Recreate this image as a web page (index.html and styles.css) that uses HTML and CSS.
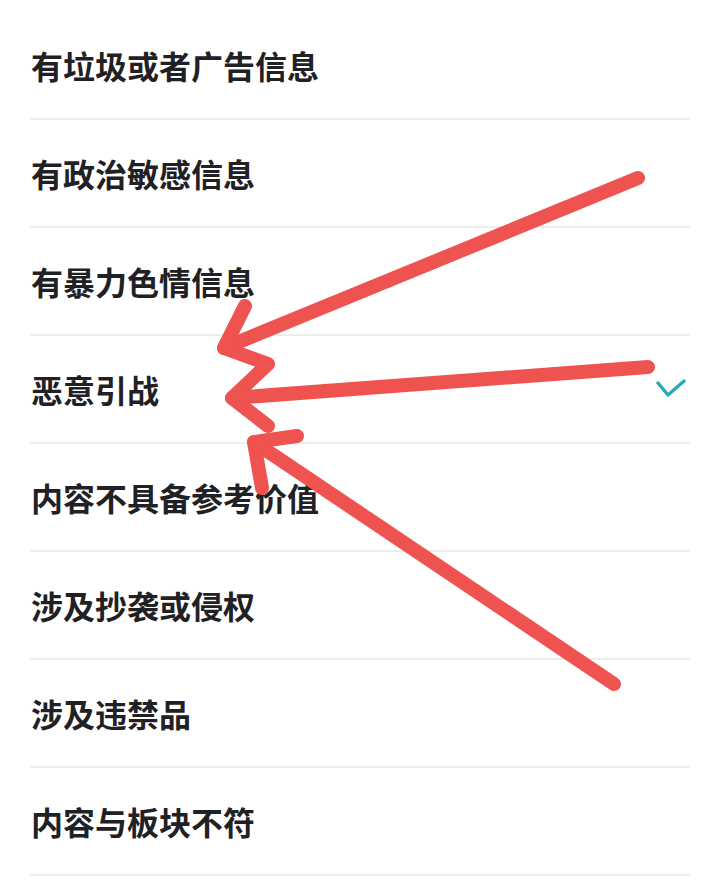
FILE: index.html
```html
<!DOCTYPE html>
<html>
<head>
  <title>举报原因</title>
  <link rel="stylesheet" href="styles.css">
</head>
<body>
  <div class="page">
    <ul class="reason-list">
      <li class="reason">有垃圾或者广告信息</li>
      <li class="reason">有政治敏感信息</li>
      <li class="reason">有暴力色情信息</li>
      <li class="reason selected">恶意引战
        <svg class="check" width="30" height="20" viewBox="0 0 30 20">
          <polyline points="2,4 12,16 28,2" fill="none" stroke="#27abb8" stroke-width="3.4" stroke-linecap="round" stroke-linejoin="round"/>
        </svg>
      </li>
      <li class="reason">内容不具备参考价值</li>
      <li class="reason">涉及抄袭或侵权</li>
      <li class="reason">涉及违禁品</li>
      <li class="reason">内容与板块不符</li>
    </ul>

    <!-- hand-drawn arrows on top of the screenshot -->
    <svg class="marks" width="720" height="884" viewBox="0 0 720 884">
      <g fill="none" stroke="#ee5350" stroke-width="14" stroke-linecap="round" stroke-linejoin="round">
        <polyline points="638,178 224,348"/>
        <polyline points="245,306 224,348 268,364 232,398 268,426"/>
        <polyline points="232,398 648,367"/>
        <polyline points="297,436 254,442 262,488"/>
        <polyline points="254,442 614,684"/>
      </g>
    </svg>
  </div>
</body>
</html>
```

FILE: styles.css
```css
body {
  margin: 0;
  background: #fff;
  font-family: "Noto Sans CJK SC", "Noto Sans", sans-serif;
}

.page {
  position: relative;
  width: 720px;
  height: 884px;
  overflow: hidden;
}

.reason-list {
  list-style: none;
  margin: 0;
  padding: 12px 30px 0;
}

.reason {
  display: flex;
  align-items: center;
  justify-content: space-between;
  height: 106px;
  padding: 0 4px 0 1px;
  border-bottom: 2px solid #ededed;
  font-size: 32px;
  font-weight: bold;
  color: #1f2125;
}

.marks {
  position: absolute;
  left: 0;
  top: 0;
}
```
